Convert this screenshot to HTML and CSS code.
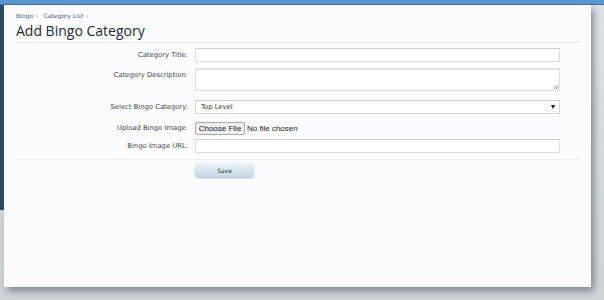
FILE: index.html
```html
<!DOCTYPE html>
<html>
<head>
<meta charset="utf-8">
<link rel="stylesheet" href="styles.css">
</head>
<body>
<div class="topbar"></div>
<div class="stage">
  <div class="sidebar"></div>
  <div class="panel">
    <nav class="crumbs"><a>Bingo</a><span class="sep">›</span><a>Category List</a><span class="sep">›</span></nav>
    <h1 class="title">Add Bingo Category</h1>
    <form class="form">
      <label class="lbl">Category Title:</label>
      <div class="ctl"><input class="txt" type="text"></div>

      <label class="lbl r2">Category Description:</label>
      <div class="ctl r2"><div class="area"><span class="grip"></span></div></div>

      <label class="lbl r3">Select Bingo Category:</label>
      <div class="ctl r3"><div class="select"><span>Top Level</span><span class="arrow"></span></div></div>

      <label class="lbl r4">Upload Bingo Image:</label>
      <div class="ctl r4 ctl-file"><span class="filebtn">Choose File</span><span class="filetxt">No file chosen</span></div>

      <label class="lbl r5">Bingo Image URL:</label>
      <div class="ctl r5"><input class="txt" type="text"></div>
    </form>
    <div class="submit">
      <span class="spacer"></span>
      <button class="save" type="button">Save</button>
    </div>
  </div>
</div>
</body>
</html>
```
FILE: styles.css
```css
html, body {
  margin: 0;
  padding: 0;
}
body {
  width: 604px;
  height: 300px;
  overflow: hidden;
  background: linear-gradient(#dfe3e6, #cfd4d7);
  font-family: "DejaVu Sans", Verdana, sans-serif;
}
.topbar {
  height: 4px;
  background: #5b97d3;
  border-bottom: 1px solid #3f72a6;
}
.stage {
  display: flex;
  align-items: flex-start;
}
.sidebar {
  width: 4px;
  height: 205px;
  background: #2c4966;
  flex: none;
}
.panel {
  width: 563px;
  height: 275px;
  padding: 7px 12px 0 12px;
  background: #fcfcfe;
  box-shadow: 3px 4px 7px rgba(60, 75, 85, 0.55);
  flex: none;
}
.crumbs {
  font-size: 6px;
  line-height: 8px;
  color: #3b5f85;
  display: flex;
  gap: 3px;
}
.crumbs .sep {
  margin-right: 2px;
  color: #6a7f95;
}
.title {
  margin: 2px 0 0 0;
  font-family: "Open Sans", "DejaVu Sans", sans-serif;
  font-weight: 400;
  font-size: 14px;
  line-height: 18px;
  color: #1e2a36;
  padding-bottom: 2px;
  border-bottom: 1px solid #e4e7eb;
}
.form {
  display: grid;
  grid-template-columns: 172px 365px;
  column-gap: 7px;
  margin-top: 5px;
  padding-bottom: 6px;
  border-bottom: 1px solid #eceef1;
}
.lbl {
  text-align: right;
  font-size: 6.8px;
  line-height: 8px;
  color: #444;
  padding-top: 3px;
}
.r2 { margin-top: 6px; }
.r3 { margin-top: 9px; }
.r4 { margin-top: 8px; }
.r5 { margin-top: 4px; }
.txt {
  display: block;
  box-sizing: border-box;
  width: 365px;
  height: 14px;
  margin: 0;
  padding: 0;
  border: 1px solid #dcdcdc;
  border-top-color: #cfcfcf;
  background: #fff;
  border-radius: 1px;
}
.area {
  position: relative;
  box-sizing: border-box;
  width: 365px;
  height: 23px;
  border: 1px solid #dcdcdc;
  border-top: 2px solid #e2e2e2;
  background: #fff;
}
.grip {
  position: absolute;
  right: 1px;
  bottom: 1px;
  width: 4px;
  height: 4px;
  background: linear-gradient(135deg, transparent 45%, #999 45%, #999 55%, transparent 55%, transparent 75%, #999 75%, #999 85%, transparent 85%);
}
.select {
  box-sizing: border-box;
  width: 365px;
  height: 14px;
  border: 1px solid #d6d6d6;
  border-top-color: #cbcbcb;
  background: #fff;
  display: flex;
  align-items: center;
  justify-content: space-between;
  padding: 0 3px 0 5px;
  font-size: 6.8px;
  color: #333;
}
.arrow {
  width: 0;
  height: 0;
  border-left: 2.5px solid transparent;
  border-right: 2.5px solid transparent;
  border-top: 4px solid #111;
  margin-right: 1px;
}
.lbl.r4 {
  padding-top: 2px;
}
.ctl-file {
  display: flex;
  align-items: center;
  height: 13px;
  font-family: "Liberation Sans", Arial, sans-serif;
  font-size: 8px;
  color: #222;
}
.filebtn {
  box-sizing: border-box;
  height: 13px;
  width: 50px;
  display: flex;
  align-items: center;
  justify-content: center;
  background: #efefef;
  border: 1px solid #a9a9a9;
  border-radius: 2px;
  margin-right: 2px;
}
.submit {
  display: flex;
  column-gap: 7px;
  padding-top: 3px;
}
.spacer {
  width: 172px;
}
.save {
  width: 59px;
  height: 14px;
  margin: 0;
  padding: 0;
  border: 0;
  border-radius: 3px;
  background: linear-gradient(#eef4f9, #c4d7e6);
  box-shadow: 0 1px 2px rgba(80, 100, 120, 0.45);
  font-family: "DejaVu Sans", Verdana, sans-serif;
  font-size: 6px;
  color: #333;
}
```
